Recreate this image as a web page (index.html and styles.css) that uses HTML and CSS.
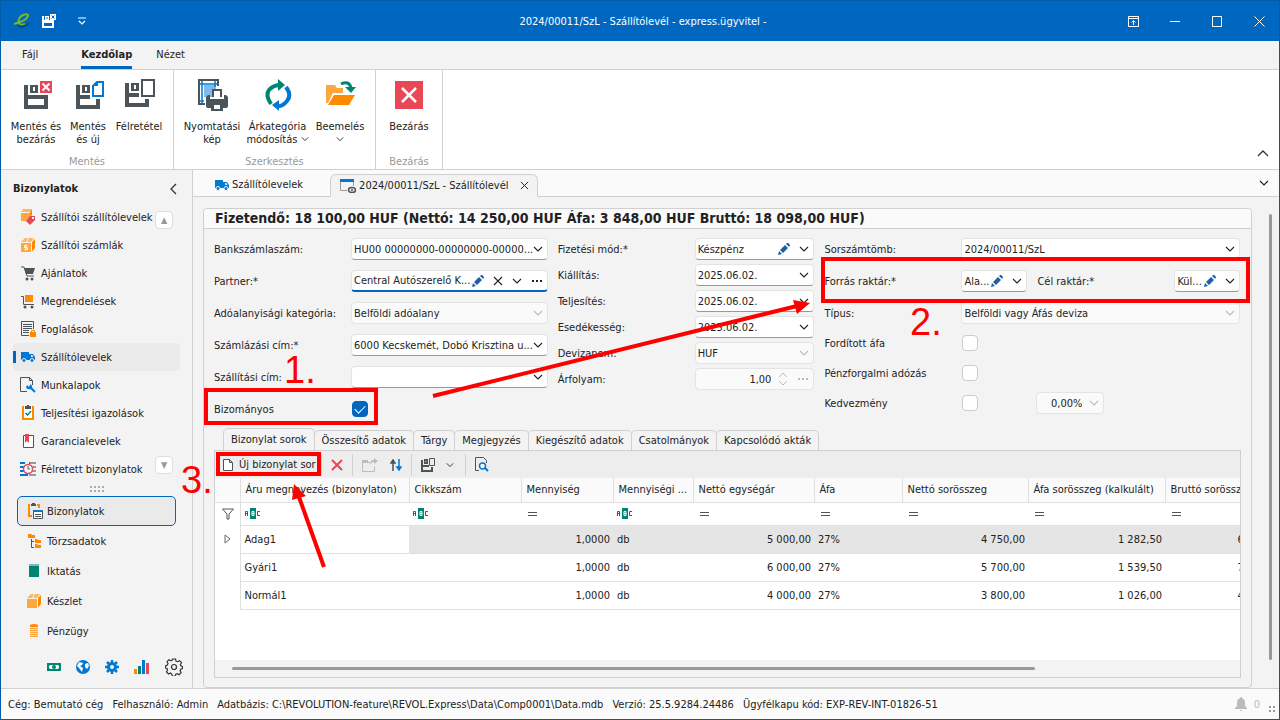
FILE: index.html
```
<!doctype html>
<html lang="hu">
<head>
<meta charset="utf-8">
<title>2024/00011/SzL - Szállítólevél</title>
<link rel="stylesheet" href="styles.css">
</head>
<body>
<svg class="defs" width="0" height="0">
	<symbol id="chev" viewBox="0 0 10 10"><path d="M1 3l4 4 4-4" fill="none" stroke="currentColor" stroke-width="1.1"/></symbol>
	<symbol id="pen" viewBox="0 0 12 12"><path d="M0 12l1-4 3 3zM2 7l5-5 3 3-5 5zM8 1l1-1q1-.3 2 .7t1 2l-1 1z" fill="#1e5fa8"/></symbol>
	<symbol id="cross" viewBox="0 0 10 10"><path d="M1 1l8 8M9 1l-8 8" fill="none" stroke="currentColor" stroke-width="1.1"/></symbol>
	<symbol id="dots" viewBox="0 0 12 4"><path d="M1 1h2v2H1zM5 1h2v2H5zM9 1h2v2H9z" fill="currentColor"/></symbol>
	<symbol id="truck" viewBox="0 0 14 12"><path d="M0 1h8v8H0zM8 3h4l2 3v3H8z" fill="#0078d4"/><path d="M10 4h1.5l1 2H10z" fill="#cfe4f7"/><circle cx="3" cy="9.500" r="2" fill="#0078d4" stroke="#f3f3f3"/><circle cx="11" cy="9.500" r="2" fill="#0078d4" stroke="#f3f3f3"/></symbol>
	<symbol id="eq" viewBox="0 0 10 4"><path d="M0 0h9v1H0zM0 3h9v1H0z" fill="#4a5459"/></symbol>
	<symbol id="abc" viewBox="0 0 16 12"><path d="M5 0h6v11H5z" fill="#008573"/><path d="M.5 8V3.500h2V8M.5 5.500h2M15 3.500h-2.500v4H15" fill="none" stroke="#4a5459"/><path d="M7 3.500h2v4H7zM7 5.500h2" fill="none" stroke="#fff"/></symbol>
	<symbol id="box" viewBox="0 0 14 14"><path d="M0 5h10v9H0z" fill="#ffa63d"/><path d="M1 3l3-3h3L5 4H0zM6 4l2-4h5l-3 4z" fill="#ffb765"/><path d="M11 4l3-3v9l-3 3.500z" fill="#ff8a00"/></symbol>
</svg>

<div class="window">
	<header class="titlebar">
		<svg class="logo" width="18" height="16" viewBox="0 0 18 16"><path d="M1 11C9 9 14 6 15 3S8 1 6 6s2 7 6 5" fill="none" stroke="#76b72a" stroke-width="2"/><path d="M5 12q4 4 11-2" fill="none" stroke="#0a4a80" stroke-width="2"/></svg>
		<button class="bare" title="Mentés és bezárás"><svg width="14" height="14" viewBox="0 0 14 14"><path d="M0 2h2v4h10v8H0zM2 9v3h8V9zM3 2h4v4H3zM4.500 3v2h1V3z" fill="#fff" fill-rule="evenodd"/><path d="M8 0h6v6H8z" fill="#fff"/><path d="M9.500 1.500l3 3M12.500 1.500l-3 3" stroke="#0067c0"/></svg></button>
		<button class="bare quick" title="Testreszabás"><svg width="8" height="8" viewBox="0 0 8 8"><path d="M0 1h8M1 4l3 3 3-3" fill="none" stroke="#fff" stroke-width="1.200"/></svg></button>
		<h1>2024/00011/SzL - Szállítólevél - express.ügyvitel -</h1>
		<div class="winbtns">
			<button class="bare"><svg width="11" height="11" viewBox="0 0 11 11"><path d="M.5.5h10v10H.5zM.5 2.500h10M5.500 9V5M3.500 6.500l2-2 2 2" fill="none" stroke="#fff"/></svg></button>
			<button class="bare"><svg width="11" height="11" viewBox="0 0 11 11"><path d="M0 5.500h10" stroke="#fff"/></svg></button>
			<button class="bare"><svg width="11" height="11" viewBox="0 0 11 11"><path d="M.5.5h9v10h-9z" fill="none" stroke="#fff"/></svg></button>
			<button class="bare"><svg width="11" height="11" viewBox="0 0 11 11"><path d="M.5.5l10 10M10.500.5l-10 10" stroke="#fff"/></svg></button>
		</div>
	</header>

	<nav class="menu">
		<a href="#">Fájl</a>
		<a href="#" class="on">Kezdőlap</a>
		<a href="#">Nézet</a>
	</nav>

	<section class="ribbon">
		<div class="rgroup">
			<div class="rbtns">
				<button class="rbtn w56"><svg viewBox="0 0 32 32"><path d="M4 6h4v10h20v14H4zM8 20v6h16v-6zM10 6h8v8h-8zM13 8v4h2V8z" fill="#4a5459" fill-rule="evenodd"/><path d="M20 2h12v12H20z" fill="#e84855"/><path d="M22.500 4.500l7 7M29.500 4.500l-7 7" stroke="#fff" stroke-width="2"/></svg>Mentés és<br>bezárás</button>
				<button class="rbtn w48"><svg viewBox="0 0 32 32"><path d="M4 6h4v10h10v4H8v6h16v-6h4v10H4zM10 6h8v8h-8zM13 8v4h2V8z" fill="#4a5459" fill-rule="evenodd"/><path d="M25 3h6v14H21V7z" fill="none" stroke="#0078d4" stroke-width="2"/><path d="M20 7l6-5v5z" fill="#0078d4"/></svg>Mentés<br>és új</button>
				<button class="rbtn w54"><svg viewBox="0 0 32 32"><path d="M2 4h4v10h10v4H6v6h16v-4h4v8H2zM8 4h8v8H8zM11 6v4h2V6z" fill="#4a5459" fill-rule="evenodd"/><path d="M19 1h12v16H19z" fill="none" stroke="#4a5459" stroke-width="2"/></svg>Félretétel</button>
			</div>
			<div class="rtitle">Mentés</div>
		</div>
		<div class="rgroup">
			<div class="rbtns">
				<button class="rbtn w62"><svg viewBox="0 0 32 32"><path d="M8 6h12v12H8z" fill="#7fb9ea"/><path d="M6 1v25M2 5h20M19 1v7M2 22h6" stroke="#0078d4" stroke-width="1.500"/><path d="M22 7V1H3v24h6" fill="none" stroke="#4a5459" stroke-width="2"/><path d="M17 18v-7h8v7" fill="#fff" stroke="#4a5459" stroke-width="2"/><path d="M14 16v4h14v-4h2l2 2v9q0 2-2 2h-3v3H15v-3h-3q-2 0-2-2v-9l2-2zM18 26v4h6v-4z" fill="#4a5459" fill-rule="evenodd"/></svg>Nyomtatási<br>kép</button>
				<button class="rbtn w69"><svg viewBox="0 0 32 32"><path d="M9 25Q3 16 7 11t12-5" fill="none" stroke="#008573" stroke-width="4"/><path d="M16 0l7 6-7 6z" fill="#008573"/><path d="M24 8q6 8 1 14t-10 5" fill="none" stroke="#0078d4" stroke-width="4"/><path d="M17 21v11l-7-6z" fill="#0078d4"/></svg>Árkategória<br>módosítás <svg class="sm"><use href="#chev"/></svg></button>
				<button class="rbtn w56"><svg viewBox="0 0 32 32"><path d="M2 6h9l2 3h6v5H9L4 24H2z" fill="#ffa63d"/><path d="M10 16h21l-6 10H4z" fill="#ff8a00"/><path d="M17 5q8-4 10 4" fill="none" stroke="#008573" stroke-width="3"/><path d="M21 8h11l-5 6z" fill="#008573"/></svg>Beemelés<br><svg class="sm"><use href="#chev"/></svg></button>
			</div>
			<div class="rtitle">Szerkesztés</div>
		</div>
		<div class="rgroup">
			<div class="rbtns">
				<button class="rbtn w52"><svg viewBox="0 0 32 32"><path d="M2 2h28v28H2z" fill="#e84855"/><path d="M9 9l14 14M23 9L9 23" stroke="#fff" stroke-width="2.500"/></svg>Bezárás</button>
			</div>
			<div class="rtitle">Bezárás</div>
		</div>
		<button class="bare collapse" title="Összecsukás"><svg width="12" height="8" viewBox="0 0 12 8"><path d="M1 7l5-5 5 5" fill="none" stroke="#333" stroke-width="1.300"/></svg></button>
	</section>

	<div class="body">
		<aside class="side">
			<div class="sidehead"><h2>Bizonylatok</h2><button class="bare"><svg width="7" height="12" viewBox="0 0 7 12"><path d="M6 1L1 6l5 5" fill="none" stroke="#333" stroke-width="1.300"/></svg></button></div>
			<div class="listwrap">
				<ul class="list">
					<li><a href="#"><svg viewBox="0 0 16 16"><path d="M1 4h9v8H1z" fill="#ffa63d"/><path d="M3 0h9l-2 3H1z" fill="#ffb765"/><path d="M10 3l2-3v6l-2 2z" fill="#ff8a00"/><path d="M10 7h5v4l-5 5-4-4z" fill="#e84855"/><path d="M12 8h2v2h-2z" fill="#fff"/></svg>Szállítói szállítólevelek</a></li>
					<li><a href="#"><svg viewBox="-1 -1 16 16"><use href="#box" width="14" height="14"/><path d="M6.500 7.500h-3v2h3v2h-3M5 6.500v6" fill="none" stroke="#fff"/></svg>Szállítói számlák</a></li>
					<li><a href="#"><svg viewBox="0 0 16 16"><path d="M1 2h3l3 9h7" fill="none" stroke="#4a5459"/><path d="M4 3h11l-2 6H6z" fill="#4a5459"/><circle cx="7" cy="14" r="1.500" fill="#4a5459"/><circle cx="12" cy="14" r="1.500" fill="#4a5459"/></svg>Ajánlatok</a></li>
					<li><a href="#"><svg viewBox="0 0 16 16"><path d="M1 3.500h2.500v8H14" fill="none" stroke="#4a5459"/><path d="M5 2h8v7H5z" fill="#ff8a00"/><circle cx="5" cy="14" r="1.500" fill="#4a5459"/><circle cx="12" cy="14" r="1.500" fill="#4a5459"/></svg>Megrendelések</a></li>
					<li><a href="#"><svg viewBox="0 0 16 16"><path d="M9 14.500H1.500v-14h12V8M3 3.500h9M3 5.500h9M3 7.500h9M3 9.500h6M3 11.500h6" fill="none" stroke="#4a5459"/><path d="M10 11h6v5h-6z" fill="#ff8a00"/><path d="M11.500 11V9.500h3V11" fill="none" stroke="#ff8a00"/></svg>Foglalások</a></li>
					<li class="on"><a href="#"><svg viewBox="-1 -2 16 16"><use href="#truck" width="14" height="12"/></svg>Szállítólevelek</a></li>
					<li><a href="#"><svg viewBox="0 0 16 16"><path d="M7 14.500H.5v-14h9l3 3V8M9.500.5v3h3" fill="none" stroke="#4a5459"/><path d="M10 10l5 5" stroke="#0078d4" stroke-width="2"/><path d="M7 8l2 2 1.500-3Q13 9 12 11t-4 1-1-4z" fill="#0078d4"/></svg>Munkalapok</a></li>
					<li><a href="#"><svg viewBox="0 0 16 16"><path d="M4 2H3v12h10V2h-1" fill="#fff" stroke="#ff8a00" stroke-width="2"/><path d="M5 1h2V0h2v1h2v3H5z" fill="#4a5459"/><path d="M5.500 8l2 2 3.500-4" fill="none" stroke="#008573" stroke-width="1.500"/></svg>Teljesítési igazolások</a></li>
					<li><a href="#"><svg viewBox="0 0 16 16"><path d="M3.500 2.500h10v12h-10z" fill="#fff" stroke="#4a5459"/><path d="M5 1h4v9L7 8l-2 2z" fill="#e84855"/></svg>Garancialevelek</a></li>
					<li><a href="#"><svg viewBox="0 0 16 16"><path d="M0 2h5M0 6h5M0 10h5M0 14h8M9 2h2" stroke="#0078d4" stroke-width="2"/><path d="M10 2h6M12 6h4M12 10h4M9 14h7" stroke="#999" stroke-width="2"/><circle cx="8" cy="8" r="4.500" fill="#fff" stroke="#e84855" stroke-width="1.500"/><path d="M8 5v3h2" fill="none" stroke="#4a5459"/></svg>Félretett bizonylatok</a></li>
				</ul>
				<div class="scrollers"><button title="Fel">▲</button><button title="Le">▼</button></div>
			</div>
			<svg class="grip" width="14" height="6" viewBox="0 0 14 6"><path d="M0 1h14M0 5h14" stroke="#aaa" stroke-width="2" stroke-dasharray="2"/></svg>
			<ul class="groups">
				<li class="on"><a href="#"><svg viewBox="0 0 16 16"><path d="M3 2H2v11h3M10 2h2v3" fill="none" stroke="#ff8a00" stroke-width="2"/><path d="M4 1h1V0h3v1h1v2H4z" fill="#4a5459"/><path d="M6.500 7.500h9v8h-9z" fill="#fff" stroke="#4a5459"/><path d="M6 7h9v2H6z" fill="#0078d4"/><path d="M8 11.500h6M8 13.500h6" stroke="#4a5459"/></svg>Bizonylatok</a></li>
				<li><a href="#"><svg viewBox="0 0 16 16"><path d="M1 1h3l1 1h3v3H1zM8 6h2l1 1h3v3H8zM8 11h2l1 1h3v3H8z" fill="#ff8a00"/><path d="M4.500 6v8.500H7M4.500 8.500H7" fill="none" stroke="#4a5459"/></svg>Törzsadatok</a></li>
				<li><a href="#"><svg viewBox="0 0 16 16"><path d="M2 3h10v11H2z" fill="#008573"/><path d="M2 2h10" stroke="#008573"/></svg>Iktatás</a></li>
				<li><a href="#"><svg viewBox="0 -1 16 16"><use href="#box" width="14" height="14"/></svg>Készlet</a></li>
				<li><a href="#"><svg viewBox="0 0 16 16"><path d="M3 2h8v12H3z" fill="#ffa63d"/><path d="M3 4.500h8M3 6.500h8M3 8.500h8M3 10.500h8M3 12.500h8" stroke="#f8d9ae"/><ellipse cx="7" cy="2.500" rx="4" ry="1.500" fill="#ff8a00"/></svg>Pénzügy</a></li>
			</ul>
			<div class="mini">
				<button class="bare"><svg width="14" height="14" viewBox="0 0 14 14"><path d="M0 3h14v8H0z" fill="#008573"/><path d="M3 5h8l1 1v2l-1 1H3L2 8V6z" fill="#f3f3f3"/><circle cx="7" cy="7" r="2" fill="#008573"/></svg></button>
				<button class="bare"><svg width="14" height="14" viewBox="0 0 14 14"><circle cx="7" cy="7" r="7" fill="#0078d4"/><path d="M3 2l4 1-1 2-2 1 3 2-1 4-3-4-2-2zM9 4l3-1 1 3-2 3-2-2z" fill="#fff"/></svg></button>
				<button class="bare"><svg width="14" height="14" viewBox="0 0 14 14"><path d="M7 0v14M0 7h14M2 2l10 10M12 2L2 12" stroke="#0078d4" stroke-width="2.500"/><circle cx="7" cy="7" r="3.500" fill="#f3f3f3" stroke="#0078d4" stroke-width="3"/></svg></button>
				<button class="bare"><svg width="16" height="14" viewBox="0 0 16 14"><path d="M0 9h3v5H0z" fill="#ff8a00"/><path d="M4 6h3v8H4z" fill="#008573"/><path d="M8 0h3v14H8z" fill="#0078d4"/><path d="M12 3h3v11h-3z" fill="#e84855"/></svg></button>
				<button class="bare"><svg width="18" height="18" viewBox="0 0 18 18"><path d="M7.500 1h3l.5 2 1.500.7 2-1 2 2-1.200 2 .7 1.300 1.500.5v2l-1.800.8-.6 1.400 1 2-2 2-2-1-1.300.6-.8 2h-2.500l-.6-2L5.500 15l-2 1-2-2 1-2L2 10.500 0.500 10V8L2.300 7 3 5.500 2 3.700l2-2 1.800 1L7 2.500z" fill="none" stroke="#333" stroke-width="1.200"/><circle cx="9" cy="9" r="2.500" fill="none" stroke="#333" stroke-width="1.200"/></svg></button>
			</div>
		</aside>

		<main class="main">
			<div class="doctabs">
				<a href="#" class="doctab"><svg width="14" height="12"><use href="#truck"/></svg>Szállítólevelek</a>
				<a href="#" class="doctab on"><svg width="16" height="14" viewBox="0 0 16 14"><path d="M7 11.500H.5V1" fill="none" stroke="#999"/><path d="M0 0h14v3H0z" fill="#0078d4"/><path d="M13.500 3v4" stroke="#999"/><ellipse cx="12" cy="11" rx="3.500" ry="2.500" fill="none" stroke="#4a5459" stroke-width="1.500"/><circle cx="12" cy="11" r="1" fill="#4a5459"/></svg>2024/00011/SzL - Szállítólevél <svg width="9" height="9" class="x"><use href="#cross"/></svg></a>
				<button class="bare more"><svg width="10" height="10"><use href="#chev"/></svg></button>
			</div>

			<div class="work">
				<section class="panel">
					<h3>Fizetendő: 18 100,00 HUF (Nettó: 14 250,00 HUF Áfa: 3 848,00 HUF Bruttó: 18 098,00 HUF)</h3>
					<form class="form">
						<div class="col">
							<div class="row"><label for="bank">Bankszámlaszám:</label><div class="field"><select id="bank"><option>HU00 00000000-00000000-00000...</option></select><svg class="ic"><use href="#chev"/></svg></div></div>
							<div class="row"><label for="partner">Partner:*</label><div class="field focus"><input id="partner" value="Central Autószerelő K..."><svg class="pen"><use href="#pen"/></svg><svg class="ic"><use href="#cross"/></svg><svg class="ic"><use href="#chev"/></svg><svg class="dots"><use href="#dots"/></svg></div></div>
							<div class="row"><label for="ado">Adóalanyisági kategória:</label><div class="field off"><select id="ado"><option>Belföldi adóalany</option></select><svg class="ic"><use href="#chev"/></svg></div></div>
							<div class="row"><label for="szamla">Számlázási cím:*</label><div class="field"><select id="szamla"><option>6000 Kecskemét, Dobó Krisztina u...</option></select><svg class="ic"><use href="#chev"/></svg></div></div>
							<div class="row"><label for="szall">Szállítási cím:</label><div class="field"><select id="szall"><option></option></select><svg class="ic"><use href="#chev"/></svg></div></div>
							<div class="row"><label for="biz">Bizományos</label><input type="checkbox" id="biz" checked></div>
						</div>
						<div class="col tight">
							<div class="row"><label for="mod">Fizetési mód:*</label><div class="field"><select id="mod"><option>Készpénz</option></select><svg class="pen"><use href="#pen"/></svg><svg class="ic"><use href="#chev"/></svg></div></div>
							<div class="row"><label for="kiall">Kiállítás:</label><div class="field"><input id="kiall" value="2025.06.02."><svg class="ic"><use href="#chev"/></svg></div></div>
							<div class="row"><label for="telj">Teljesítés:</label><div class="field"><input id="telj" value="2025.06.02."><svg class="ic"><use href="#chev"/></svg></div></div>
							<div class="row"><label for="esed">Esedékesség:</label><div class="field"><input id="esed" value="2025.06.02."><svg class="ic"><use href="#chev"/></svg></div></div>
							<div class="row"><label for="dev">Devizanem:</label><div class="field off"><select id="dev"><option>HUF</option></select><svg class="ic"><use href="#chev"/></svg></div></div>
							<div class="row"><label for="arf">Árfolyam:</label><div class="field off"><input id="arf" class="num" value="1,00"><svg class="spin" viewBox="0 0 10 14"><path d="M1 5l4-4 4 4M1 9l4 4 4-4" fill="none" stroke="currentColor"/></svg><svg class="dots"><use href="#dots"/></svg></div></div>
						</div>
						<div class="col">
							<div class="row"><label for="sor">Sorszámtömb:</label><div class="field"><select id="sor"><option>2024/00011/SzL</option></select><svg class="ic"><use href="#chev"/></svg></div></div>
							<div class="row"><label for="forras">Forrás raktár:*</label><div class="field short"><input id="forras" value="Ala..."><svg class="pen"><use href="#pen"/></svg><svg class="ic"><use href="#chev"/></svg></div><label class="second" for="cel">Cél raktár:*</label><div class="field short"><input id="cel" value="Kül..."><svg class="pen"><use href="#pen"/></svg><svg class="ic"><use href="#chev"/></svg></div></div>
							<div class="row"><label for="tipus">Típus:</label><div class="field off"><select id="tipus"><option>Belföldi vagy Áfás deviza</option></select><svg class="ic"><use href="#chev"/></svg></div></div>
							<div class="row check"><label for="ford">Fordított áfa</label><input type="checkbox" id="ford"></div>
							<div class="row check"><label for="penz">Pénzforgalmi adózás</label><input type="checkbox" id="penz"></div>
							<div class="row check"><label for="kedv">Kedvezmény</label><input type="checkbox" id="kedv"><div class="field off percent"><input class="num" aria-label="Kedvezmény mértéke" value="0,00%"><svg class="ic"><use href="#chev"/></svg></div></div>
						</div>
					</form>

					<div class="tabs">
						<button class="on">Bizonylat sorok</button><button>Összesítő adatok</button><button>Tárgy</button><button>Megjegyzés</button><button>Kiegészítő adatok</button><button>Csatolmányok</button><button>Kapcsolódó akták</button>
					</div>
					<div class="lines">
						<div class="tools">
							<button class="bare new"><svg width="10" height="12" viewBox="0 0 10 12"><path d="M.5.5h6l3 3v8h-9zM6.500.5v3h3" fill="#fff" stroke="#4a5459"/></svg>Új bizonylat sor</button>
							<i></i>
							<button class="bare" title="Törlés"><svg width="12" height="12" viewBox="0 0 12 12"><path d="M1 1l10 10M11 1L1 11" stroke="#e84855" stroke-width="2"/></svg></button>
							<i></i>
							<button class="bare"><svg width="16" height="14" viewBox="0 0 16 14"><path d="M.5 3.500v10h12v-5M0 4.500h8" fill="none" stroke="#bbb"/><path d="M0 2h6v3H0zM12 0l4 3-4 3V4Q9 4 8 7q0-5 4-5z" fill="#bbb"/></svg></button>
							<button class="bare sort"><svg width="12" height="12" viewBox="0 0 12 12"><path d="M3 12V3M1 4l2-3 2 3z" stroke="#4a5459" stroke-width="1.500"/><path d="M9 0v9M7 8l2 3 2-3z" fill="#0078d4" stroke="#0078d4" stroke-width="1.500"/></svg></button>
							<i></i>
							<button class="bare"><svg width="14" height="14" viewBox="0 0 14 14"><path d="M0 2h2v5h6v2H2v3h8V9h2v5H0zM3 1h4v5H3zM4.500 3v1h1V3z" fill="#4a5459" fill-rule="evenodd"/><path d="M8.500.5h5v7h-5z" fill="none" stroke="#4a5459"/></svg></button>
							<button class="bare drop"><svg width="8" height="8"><use href="#chev"/></svg></button>
							<i></i>
							<button class="bare"><svg width="14" height="15" viewBox="0 0 14 15"><path d="M4 13.500H.5V.5h8l3 3V6" fill="none" stroke="#4a5459"/><circle cx="7.500" cy="9" r="3" fill="#fff" stroke="#0078d4" stroke-width="1.500"/><path d="M10 11l3 3" stroke="#0078d4" stroke-width="2"/></svg></button>
						</div>
						<div class="gridwrap">
							<table class="grid">
								<colgroup><col class="c-ind"><col class="c-name"><col class="c-code"><col class="c-qty"><col class="c-unit"><col class="c-price"><col class="c-vat"><col class="c-net"><col class="c-vsum"><col class="c-gross"></colgroup>
								<thead>
									<tr><th></th><th>Áru megnevezés (bizonylaton)</th><th>Cikkszám</th><th>Mennyiség</th><th>Mennyiségi ...</th><th>Nettó egységár</th><th>Áfa</th><th>Nettó sorösszeg</th><th>Áfa sorösszeg (kalkulált)</th><th>Bruttó sorösszeg</th></tr>
									<tr class="filter"><td><svg width="12" height="12" viewBox="0 0 12 12"><path d="M.5 1h11L7 6v5H5V6z" fill="none" stroke="#555"/></svg></td><td><svg width="16" height="12"><use href="#abc"/></svg></td><td><svg width="16" height="12"><use href="#abc"/></svg></td><td><svg class="eq" width="10" height="4"><use href="#eq"/></svg></td><td><svg width="16" height="12"><use href="#abc"/></svg></td><td><svg class="eq" width="10" height="4"><use href="#eq"/></svg></td><td><svg class="eq" width="10" height="4"><use href="#eq"/></svg></td><td><svg class="eq" width="10" height="4"><use href="#eq"/></svg></td><td><svg class="eq" width="10" height="4"><use href="#eq"/></svg></td><td><svg class="eq" width="10" height="4"><use href="#eq"/></svg></td></tr>
								</thead>
								<tbody>
									<tr class="sel"><td><svg width="8" height="10" viewBox="0 0 8 10"><path d="M1 1l5 4-5 4z" fill="none" stroke="#666"/></svg></td><td>Adag1</td><td></td><td class="r">1,0000</td><td>db</td><td class="r">5 000,00</td><td>27%</td><td class="r">4 750,00</td><td class="r">1 282,50</td><td class="r">6 032,50</td></tr>
									<tr><td></td><td>Gyári1</td><td></td><td class="r">1,0000</td><td>db</td><td class="r">6 000,00</td><td>27%</td><td class="r">5 700,00</td><td class="r">1 539,50</td><td class="r">7 239,50</td></tr>
									<tr><td></td><td>Normál1</td><td></td><td class="r">1,0000</td><td>db</td><td class="r">4 000,00</td><td>27%</td><td class="r">3 800,00</td><td class="r">1 026,00</td><td class="r">4 826,00</td></tr>
								</tbody>
							</table>
						</div>
						<div class="hscroll"><span></span></div>
					</div>
				</section>
				<div class="vscroll"></div>
			</div>
		</main>
	</div>

	<footer class="status">
		<span>Cég: Bemutató cég</span><span>Felhasználó: Admin</span><span>Adatbázis: C:\REVOLUTION-feature\REVOL.Express\Data\Comp0001\Data.mdb</span><span>Verzió: 25.5.9284.24486</span><span>Ügyfélkapu kód: EXP-REV-INT-01826-51</span>
		<span class="bell"><svg width="12" height="14" viewBox="0 0 12 14"><path d="M6 0q1 0 1 1.200Q10 2 10 6v3l2 2v1H0v-1l2-2V6q0-4 3-4.800Q5 0 6 0zM5 13h2v1H5z" fill="#bbb"/></svg>0</span>
		<svg class="size" width="6" height="6" viewBox="0 0 6 6"><path d="M0 0h2v2H0zM4 0h2v2H4zM0 4h2v2H0zM4 4h2v2H4z" fill="#999"/></svg>
	</footer>
</div>

<!-- numbered steps over the form -->
<svg class="notes" width="1280" height="720" viewBox="0 0 1280 720">
	<g fill="none" stroke="#f00" stroke-width="4">
		<rect x="206" y="390" width="170" height="33"/>
		<rect x="823" y="259" width="425" height="42"/>
		<rect x="218" y="454" width="101" height="20"/>
		<path d="M433 396L797 306M324 567L299 497"/>
	</g>
	<path d="M810 303L793 300 797 314zM294 484L292 500 306 496z" fill="#f00"/>
	<g class="num">
		<text x="284" y="383">1.</text>
		<text x="910" y="335">2.</text>
		<text x="181" y="493">3.</text>
	</g>
</svg>
</body>
</html>
```
FILE: styles.css
```
*{
	box-sizing: border-box;
	margin: 0;
	padding: 0;
}
body{
	font: 11px/13px "DejaVu Sans Condensed", "Noto Sans", sans-serif;
	color: #222;
}
ul{
	list-style: none;
}
a{
	color: inherit;
	text-decoration: none;
}
button, input, select{
	font: inherit;
	color: inherit;
}
svg{
	flex: none;
}
.defs{
	position: absolute;
}
.bare{
	border: 0;
	background: none;
	display: flex;
	align-items: center;
}
.window{
	height: 100vh;
	display: flex;
	flex-direction: column;
	border: 1px solid #005ba8;
	border-top: 0;
	background: #f3f3f3;
	overflow: hidden;
}

/* title bar */
.titlebar{
	height: 41px;
	background: #0067c0;
	border-top: 1px solid #005ba8;
	color: #fff;
	display: flex;
	align-items: center;
	padding: 0 14px 0 12px;
}
.titlebar .logo{
	margin-right: 11px;
}
.quick{
	margin-left: 22px;
}
.titlebar h1{
	flex: 1;
	font-size: 11px;
	font-weight: normal;
	text-align: center;
	padding-left: 72px;
}
.winbtns{
	display: flex;
	gap: 31px;
}

/* menu and ribbon */
.menu{
	height: 29px;
	display: flex;
	gap: 24px;
	border-bottom: 1px solid #d0d0d0;
	padding-left: 21px;
}
.menu a{
	line-height: 28px;
}
.menu .on{
	font-weight: bold;
	margin-left: 19px;
	border-bottom: 3px solid #0067c0;
}
.ribbon{
	height: 100px;
	display: flex;
	background: #fff;
	border-bottom: 1px solid #d0d0d0;
}
.rgroup{
	display: flex;
	flex-direction: column;
	justify-content: space-between;
	border-right: 1px solid #d0d0d0;
	padding: 9px 7px 1px;
}
.rbtns{
	display: flex;
	align-items: flex-start;
}
.rbtn{
	border: 0;
	background: none;
	text-align: center;
	white-space: nowrap;
}
.rbtn svg{
	display: block;
	width: 32px;
	height: 32px;
	margin: 0 auto 9px;
}
.rbtn .sm{
	display: inline-block;
	width: 8px;
	height: 8px;
	margin: 0;
}
.w48{ width: 48px; }
.w52{ width: 52px; }
.w54{ width: 54px; }
.w56{ width: 56px; }
.w62{ width: 62px; }
.w69{ width: 69px; }
.rtitle{
	text-align: center;
	color: #999;
}
.collapse{
	margin: auto 10px 12px auto;
}

/* side bar */
.body{
	flex: 1;
	display: flex;
	min-height: 0;
}
.side{
	width: 192px;
	border-right: 1px solid #d0d0d0;
	display: flex;
	flex-direction: column;
}
.sidehead{
	height: 33px;
	display: flex;
	align-items: center;
	justify-content: space-between;
	padding: 4px 15px 0 12px;
}
.sidehead h2{
	font-size: 11px;
}
.listwrap{
	display: flex;
}
.list{
	width: 167px;
	margin-left: 12px;
}
.list a{
	height: 28px;
	display: flex;
	align-items: center;
	gap: 5px;
	padding-left: 7px;
	white-space: nowrap;
}
.list svg, .groups svg{
	width: 16px;
	height: 16px;
}
.list .on{
	background: #eaeaea;
	border-radius: 4px;
}
.list .on a{
	background: linear-gradient(#0067c0, #0067c0) 0 50% / 3px 12px no-repeat;
}
.scrollers{
	display: flex;
	flex-direction: column;
	justify-content: space-between;
	margin-left: -25px;
	padding: 8px 0 9px;
}
.scrollers button{
	width: 18px;
	height: 18px;
	border: 1px solid #ddd;
	border-radius: 4px;
	background: #fff;
	color: #999;
	font-size: 9px;
	line-height: 14px;
}
.grip{
	margin: 3px auto 4px;
}
.groups{
	margin: 0 16px;
}
.groups a{
	height: 30px;
	display: flex;
	align-items: center;
	gap: 4px;
	padding-left: 9px;
	border: 1px solid transparent;
	border-radius: 5px;
}
.groups .on a{
	border-color: #0067c0;
	background: #eaeaea;
}
.mini{
	display: flex;
	align-items: center;
	gap: 15px;
	margin: 12px 9px 0 auto;
}

/* document tabs */
.main{
	flex: 1;
	min-width: 0;
	display: flex;
	flex-direction: column;
}
.doctabs{
	height: 27px;
	display: flex;
	background: #fafafa;
	border-bottom: 1px solid #d0d0d0;
}
.doctab{
	display: flex;
	align-items: center;
	gap: 3px;
	padding: 3px 27px 0 22px;
}
.doctab.on{
	height: 23px;
	margin-top: 4px;
	padding: 0 8px 0 9px;
	background: #f3f3f3;
	border: 1px solid #d0d0d0;
	border-bottom-color: #f3f3f3;
	border-radius: 6px 6px 0 0;
}
.doctab .x{
	margin-left: 8px;
}
.more{
	margin: 0 10px 0 auto;
}

/* form */
.work{
	flex: 1;
	min-height: 0;
	display: flex;
	padding: 11px 7px 0 10px;
}
.panel{
	flex: 1;
	min-width: 0;
	display: flex;
	flex-direction: column;
	border: 1px solid #d0d0d0;
	border-radius: 4px;
	padding: 0 10px 9px;
}
.panel h3{
	margin: 0 -10px;
	padding-left: 11px;
	height: 20px;
	font-size: 14px;
	line-height: 19px;
	white-space: nowrap;
	background: #fafafa;
	border-bottom: 1px solid #d0d0d0;
	border-radius: 4px 4px 0 0;
}
.form{
	display: grid;
	grid-template-columns: 334fr 257fr 416fr;
	column-gap: 10px;
	padding: 9px 1px 0 0;
}
.col{
	display: flex;
	flex-direction: column;
	gap: 10px;
	min-width: 0;
}
.tight{
	gap: 4px;
}
.row{
	height: 22px;
	display: flex;
	align-items: center;
}
.check{
	margin-top: -2px;
}
.row label{
	width: 137px;
	flex: none;
	white-space: nowrap;
}
.row .second{
	margin-left: 10px;
}
.field{
	flex: 1;
	min-width: 0;
	height: 22px;
	display: flex;
	align-items: center;
	background: #fff;
	border: 1px solid #e4e4e4;
	border-bottom-color: #999;
	border-radius: 4px;
	padding: 0 4px 0 2px;
	color: #222;
}
.field input, .field select{
	flex: 1;
	width: 0;
	min-width: 0;
	border: 0;
	outline: 0;
	background: none;
	appearance: none;
}
.field.focus{
	border-bottom: 2px solid #0067c0;
}
.field.off{
	background: #fafafa;
	border-color: #e4e4e4;
}
.off svg{
	color: #bbb;
}
.field .num{
	text-align: right;
}
.field.short{
	flex: none;
	width: 66px;
}
.field.percent{
	flex: none;
	width: 68px;
	margin-left: 58px;
}
.ic{
	width: 10px;
	height: 10px;
}
.pen{
	width: 12px;
	height: 12px;
}
.dots{
	width: 12px;
	height: 4px;
}
.spin{
	width: 10px;
	height: 14px;
	margin-left: 7px;
}
.pen + .ic, .ic + .ic, .ic + .dots, .spin + .dots{
	margin-left: 9px;
}
.num + .ic{
	margin-left: 7px;
}
input[type=checkbox]{
	appearance: none;
	width: 16px;
	height: 16px;
	margin-left: 1px;
	background: #fff;
	border: 1px solid #ccc;
	border-radius: 4px;
}
input[type=checkbox]:checked{
	border-color: #0067c0;
	background: #0067c0;
	display: grid;
	place-items: center;
}
input[type=checkbox]:checked::after{
	content: "";
	width: 9px;
	height: 5px;
	margin-top: -3px;
	border: solid #fff;
	border-width: 0 0 1px 1px;
	transform: rotate(-45deg);
}

/* lines */
.tabs{
	display: flex;
	align-items: flex-end;
	height: 22px;
	margin: 8px 9px 0;
}
.tabs button{
	height: 20px;
	padding: 0 7px;
	margin-right: -1px;
	background: #f3f3f3;
	border: 1px solid #d0d0d0;
	border-bottom: 0;
	border-radius: 5px 5px 0 0;
	white-space: nowrap;
}
.tabs .on{
	height: 22px;
}
.lines{
	flex: 1;
	min-height: 0;
	display: flex;
	flex-direction: column;
	border: 1px solid #d0d0d0;
}
.tools{
	height: 27px;
	display: flex;
	align-items: center;
	gap: 9px;
	padding-left: 8px;
	background: #ededed;
}
.tools i{
	width: 1px;
	height: 22px;
	background: #d0d0d0;
}
.tools .new{
	gap: 6px;
	margin-right: -4px;
	white-space: nowrap;
}
.sort{
	margin-left: 3px;
}
.drop{
	margin: 0 2px;
}
.gridwrap{
	flex: 1;
	min-height: 0;
	overflow: hidden;
	background: #fff;
}
.grid{
	width: 1070px;
	table-layout: fixed;
	border-collapse: collapse;
}
.c-ind{ width: 25px; }
.c-name{ width: 169px; }
.c-code{ width: 112px; }
.c-qty{ width: 92px; }
.c-unit{ width: 80px; }
.c-price{ width: 121px; }
.c-vat{ width: 88px; }
.c-net{ width: 126px; }
.c-vsum{ width: 137px; }
.grid th{
	height: 24px;
	padding-left: 5px;
	font-weight: normal;
	text-align: left;
	white-space: nowrap;
	background: #fafafa;
	border: 1px solid #e0e0e0;
	border-left: 0;
	border-top: 0;
}
.grid td{
	height: 28px;
	padding: 0 3px 0 4px;
	white-space: nowrap;
	border-bottom: 1px solid #e0e0e0;
}
.grid .filter td{
	height: 23px;
}
.grid td:first-child{
	text-align: center;
	border-right: 1px solid #e0e0e0;
	border-bottom: 0;
}
.grid td svg{
	display: block;
}
.grid .eq{
	margin-left: 3px;
}
.grid td:first-child svg{
	margin: 0 auto;
}
.grid .r{
	text-align: right;
}
.sel td:nth-child(n+3){
	background: #e5e5e5;
}
.hscroll{
	height: 17px;
	padding: 7px 17px;
}
.hscroll span{
	display: block;
	width: 81%;
	height: 3px;
	background: #999;
	border-radius: 2px;
}
.vscroll{
	width: 3px;
	margin: 6px 0 28px 17px;
	background: #999;
	border-radius: 2px;
}

/* status bar */
.status{
	height: 31px;
	display: flex;
	align-items: center;
	gap: 9px;
	padding: 0 4px 0 7px;
	background: #fafafa;
	border-top: 1px solid #d0d0d0;
	white-space: nowrap;
}
.bell{
	display: flex;
	align-items: center;
	gap: 7px;
	margin-left: auto;
	color: #bbb;
}
.size{
	margin: auto 0 7px;
}

.notes{
	position: absolute;
	left: 0;
	top: 0;
	pointer-events: none;
}
.notes .num{
	font: 38px "Liberation Sans", Arial, sans-serif;
	fill: #f00;
}
```
